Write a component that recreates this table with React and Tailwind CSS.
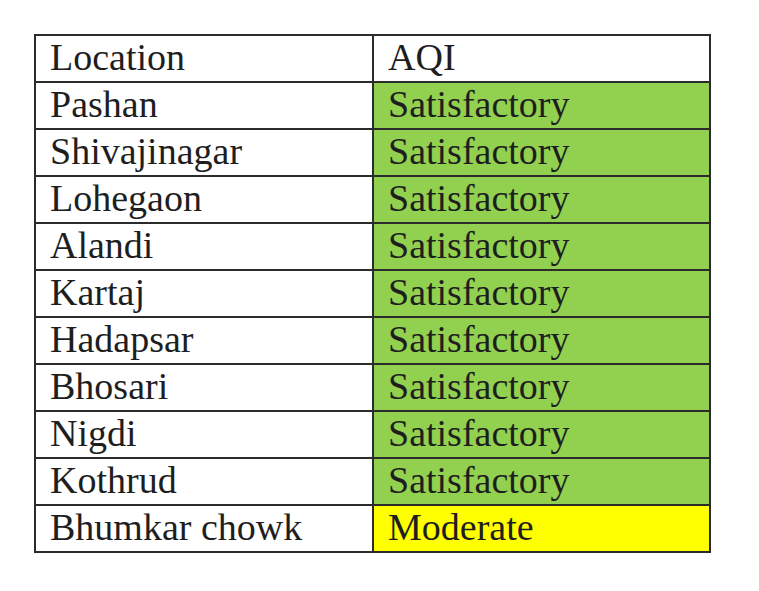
import React from 'react';

const rows = [
  { location: 'Pashan', aqi: 'Satisfactory' },
  { location: 'Shivajinagar', aqi: 'Satisfactory' },
  { location: 'Lohegaon', aqi: 'Satisfactory' },
  { location: 'Alandi', aqi: 'Satisfactory' },
  { location: 'Kartaj', aqi: 'Satisfactory' },
  { location: 'Hadapsar', aqi: 'Satisfactory' },
  { location: 'Bhosari', aqi: 'Satisfactory' },
  { location: 'Nigdi', aqi: 'Satisfactory' },
  { location: 'Kothrud', aqi: 'Satisfactory' },
  { location: 'Bhumkar chowk', aqi: 'Moderate' },
];

// 空气质量对应的背景色
const aqiColor = (aqi) => (aqi === 'Moderate' ? 'bg-[#ffff00]' : 'bg-[#92d050]');

const App = () => {
  return (
    <div className="w-[759px] h-[591px] bg-white pt-[34px] pl-[34px] font-['Liberation_Serif','Times_New_Roman',serif] text-[38px] text-[#1e1e1e]">
      <table className="border-collapse table-fixed w-[675px]">
        <colgroup>
          <col className="w-[338px]" />
          <col className="w-[337px]" />
        </colgroup>
        <thead>
          <tr className="h-[47px]">
            <th className="border-2 border-[#2b2b2b] px-[14px] pt-0 pb-[4px] text-left font-normal leading-[40px]">Location</th>
            <th className="border-2 border-[#2b2b2b] px-[14px] pt-0 pb-[4px] text-left font-normal leading-[40px]">AQI</th>
          </tr>
        </thead>
        <tbody>
          {rows.map((row) => (
            <tr key={row.location} className="h-[47px]">
              <td className="border-2 border-[#2b2b2b] px-[14px] pt-0 pb-[4px] leading-[40px]">{row.location}</td>
              <td className={`border-2 border-[#2b2b2b] px-[14px] pt-0 pb-[4px] leading-[40px] ${aqiColor(row.aqi)}`}>{row.aqi}</td>
            </tr>
          ))}
        </tbody>
      </table>
    </div>
  );
};

export default App;
